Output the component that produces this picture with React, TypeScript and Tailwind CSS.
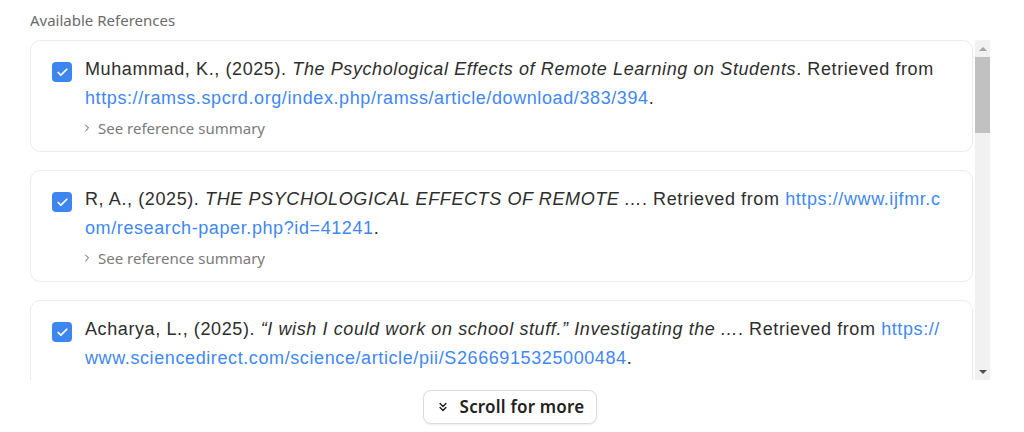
import { ChevronRight, ChevronsDown, Check } from "lucide-react";

type Ref = {
  id: number;
  lead: string;
  title: string;
  url: string;
  wrapWhole?: boolean;
};

const REFS: Ref[] = [
  {
    id: 1,
    lead: "Muhammad, K., (2025). ",
    title: "The Psychological Effects of Remote Learning on Students",
    url: "https://ramss.spcrd.org/index.php/ramss/article/download/383/394",
    wrapWhole: true,
  },
  {
    id: 2,
    lead: "R, A., (2025). ",
    title: "THE PSYCHOLOGICAL EFFECTS OF REMOTE ...",
    url: "https://www.ijfmr.com/research-paper.php?id=41241",
  },
  {
    id: 3,
    lead: "Acharya, L., (2025). ",
    title: "“I wish I could work on school stuff.” Investigating the ...",
    url: "https://www.sciencedirect.com/science/article/pii/S2666915325000484",
  },
];

function RefCard({ r }: { r: Ref }) {
  return (
    <div className="flex shrink-0 gap-[13px] rounded-[10px] border border-[#ececec] bg-white pl-[21px] pr-[21px] pt-[14px] pb-[15px]">
      <div className="mt-[7px] flex h-5 w-5 shrink-0 items-center justify-center rounded-[4px] bg-[#3d86f0]">
        <Check size={13} strokeWidth={3.2} className="text-white" />
      </div>
      <div className="min-w-0 flex-1">
        <p className="font-['Liberation_Sans',Arial,sans-serif] text-[18px] leading-[29px] tracking-[0.6px] text-[#2e2e2e]">
          {r.lead}
          <i>{r.title}</i>. Retrieved from{" "}
          <a
            className={r.wrapWhole ? "break-words text-[#3f88f2]" : "break-all text-[#3f88f2]"}
            href={r.url}
          >
            {r.url}
          </a>
          .
        </p>
        <div className="mt-[7px] flex h-4 items-center gap-[5px] font-['Noto_Sans',sans-serif] text-[15px] text-[#7a7a7a]">
          <ChevronRight size={12} strokeWidth={2} className="-ml-[4px] text-[#555]" />
          <span>See reference summary</span>
        </div>
      </div>
    </div>
  );
}

export default function App() {
  return (
    <div className="h-[432px] w-[1024px] bg-white pl-[30px] pr-[34px] pt-[10px] font-['Noto_Sans',sans-serif]">
      <div className="h-5 text-[15px] leading-5 text-[#6b6b6b]">Available References</div>
      <div className="mt-[10px] flex h-[340px] gap-[2px]">
        <div className="flex flex-1 flex-col gap-[18px] overflow-hidden">
          {REFS.map((r) => (
            <RefCard key={r.id} r={r} />
          ))}
        </div>
        <div className="flex w-[15px] flex-col items-center bg-[#f1f1f1]">
          <div className="flex h-[17px] items-center justify-center">
            <div className="h-0 w-0 border-x-[4px] border-b-[4px] border-x-transparent border-b-[#a3a3a3]" />
          </div>
          <div className="h-[76px] w-[15px] bg-[#c1c1c1]" />
          <div className="flex-1" />
          <div className="flex h-[17px] items-center justify-center">
            <div className="h-0 w-0 border-x-[4px] border-t-[4px] border-x-transparent border-t-[#505050]" />
          </div>
        </div>
      </div>
      <div className="mt-[10px] flex justify-center">
        <button className="flex h-[34px] items-center gap-[10px] rounded-lg border border-[#dcdcdc] bg-white px-[12px] text-[17px] font-semibold tracking-[0.2px] text-[#222] shadow-[0_1px_2px_rgba(0,0,0,0.08)]">
          <ChevronsDown size={14} strokeWidth={2.5} />
          Scroll for more
        </button>
      </div>
    </div>
  );
}
